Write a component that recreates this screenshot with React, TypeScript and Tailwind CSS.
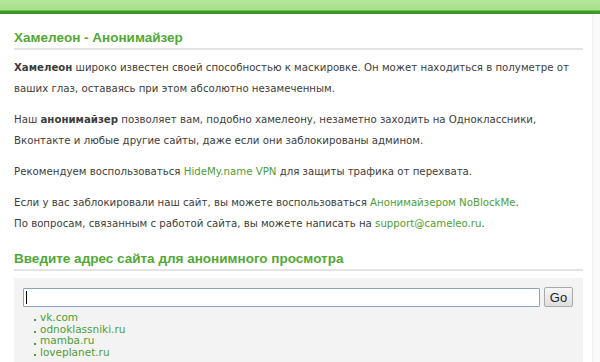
const links = ['vk.com', 'odnoklassniki.ru', 'mamba.ru', 'loveplanet.ru'];

export default function App() {
  return (
    <div className="w-[600px] h-[362px] overflow-hidden bg-white relative">
      {/* Top band */}
      <div className="h-[10px] bg-gradient-to-b from-[#b4e79a] to-[#a6e186]" />
      <div className="h-[1px] bg-[#6fc24f]" />
      <div className="h-[3px] bg-[#3b9a2b]" />

      <div className="absolute right-0 top-[14px] bottom-0 w-[8px] bg-[#fafafa] border-l border-[#f0f0f0]" />

      <div className="pl-[14px] pr-[17px] pt-[16px]">
        <h2
          className="text-[13.5px] font-bold leading-[16px] text-[#52a835]"
          style={{ fontFamily: '"Liberation Sans", Arial, sans-serif' }}
        >
          Хамелеон - Анонимайзер
        </h2>
        <div className="mt-[2px] h-[2px] bg-[#e4e4e4]" />

        <div
          className="mt-[7px] text-[10.2px] leading-[21px] text-[#3d3d3d] whitespace-nowrap"
          style={{ fontFamily: '"DejaVu Sans", Verdana, sans-serif' }}
        >
          <p className="mb-[10px]">
            <b>Хамелеон</b> широко известен своей способностью к маскировке. Он может находиться в полуметре от
            <br />
            ваших глаз, оставаясь при этом абсолютно незамеченным.
          </p>
          <p className="mb-[10px]">
            Наш <b>анонимайзер</b> позволяет вам, подобно хамелеону, незаметно заходить на Одноклассники,
            <br />
            Вконтакте и любые другие сайты, даже если они заблокированы админом.
          </p>
          <p className="mb-[10px]">
            Рекомендуем воспользоваться <a className="text-[#4f9d33]">HideMy.name VPN</a> для защиты трафика от перехвата.
          </p>
          <p>
            Если у вас заблокировали наш сайт, вы можете воспользоваться{' '}
            <a className="text-[#4f9d33]">Анонимайзером NoBlockMe</a>.
            <br />
            По вопросам, связанным с работой сайта, вы можете написать на{' '}
            <a className="text-[#4f9d33]">support@cameleo.ru</a>.
          </p>
        </div>

        <h2
          className="mt-[17px] text-[13.5px] font-bold leading-[16px] text-[#52a835]"
          style={{ fontFamily: '"Liberation Sans", Arial, sans-serif' }}
        >
          Введите адрес сайта для анонимного просмотра
        </h2>
        <div className="mt-[2px] h-[2px] bg-[#e4e4e4]" />

        <div className="mt-[7px] bg-[#f3f3f3] pl-[9px] pr-[10px] pt-[9px] pb-4">
          <div className="flex items-center gap-[4px]">
            <div className="flex-1 h-[19px] bg-white border border-[#8aa5c4] rounded-[1px] flex items-center pl-[2px]">
              <span className="w-[1px] h-[13px] bg-black" />
            </div>
            <button
              className="h-[20px] w-[29px] border border-[#a9a9a9] rounded-[2px] bg-gradient-to-b from-[#f6f6f6] to-[#dedede] text-[13px] leading-none text-[#222]"
              style={{ fontFamily: '"Liberation Sans", Arial, sans-serif' }}
            >
              Go
            </button>
          </div>
          <ul
            className="mt-[5px] pl-[11px] text-[10.5px] leading-[11.7px] text-[#4f9d33]"
            style={{ fontFamily: '"DejaVu Sans", Verdana, sans-serif' }}
          >
            {links.map(l => (
              <li key={l} className="flex items-center gap-[4px]">
                <span className="w-[2px] h-[2px] bg-[#4f9d33] mt-[5px]" />
                <a>{l}</a>
              </li>
            ))}
          </ul>
        </div>
      </div>
    </div>
  );
}
